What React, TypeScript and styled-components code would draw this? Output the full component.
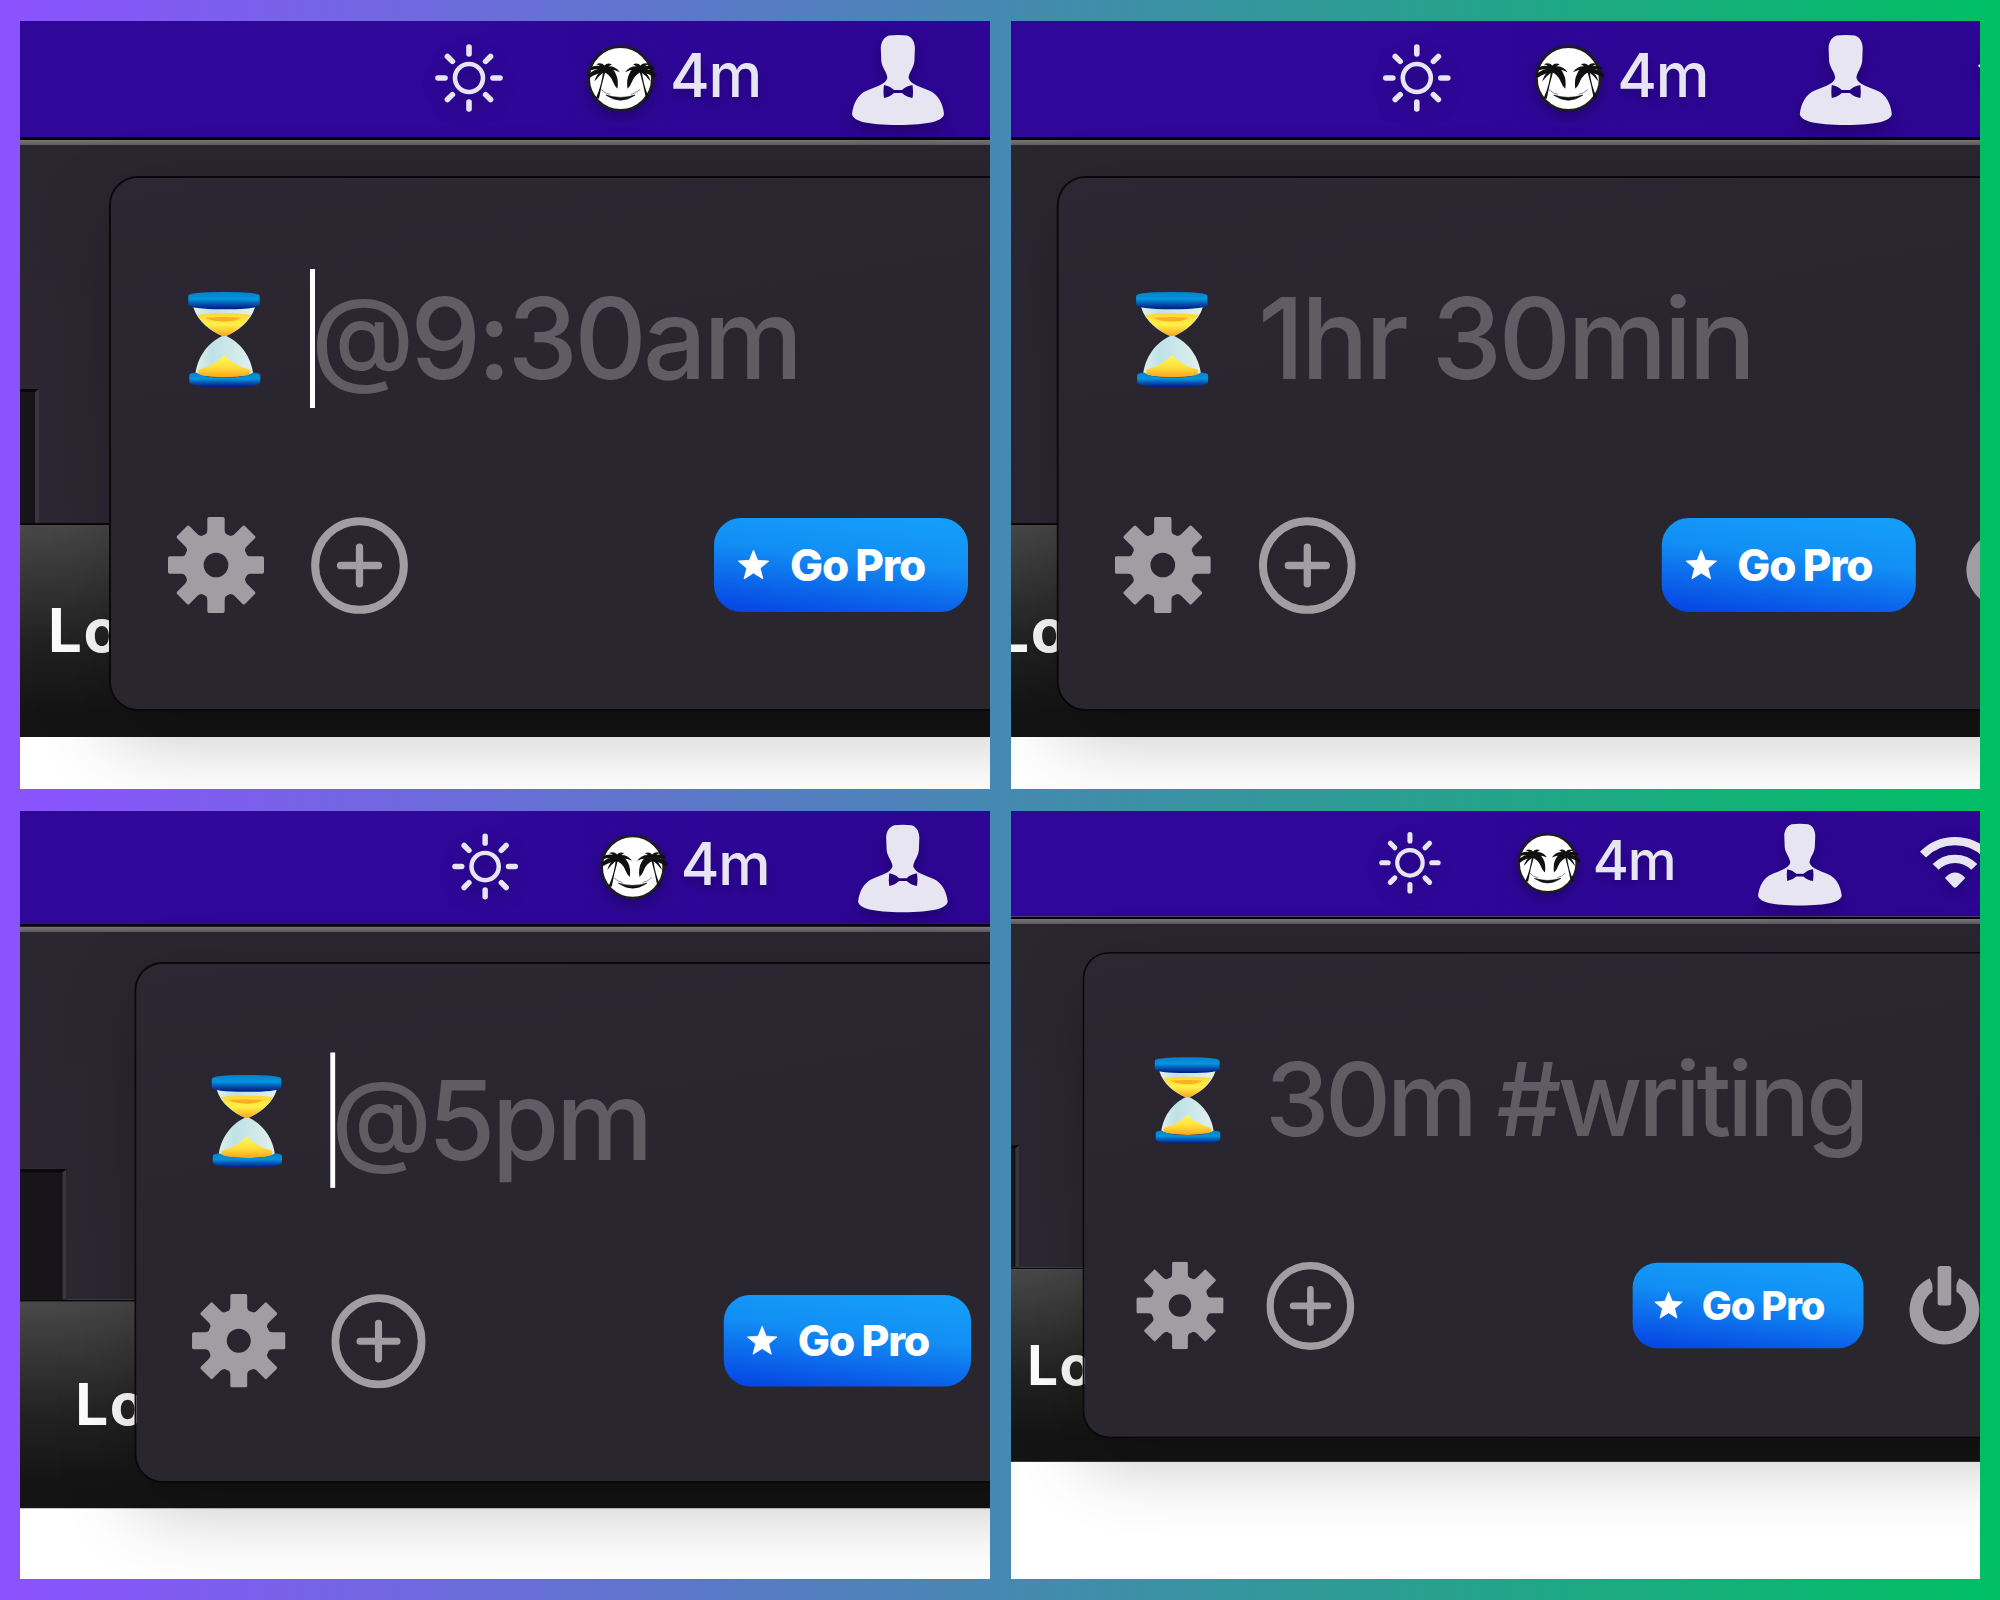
import React from "react";
import styled, { createGlobalStyle } from "styled-components";

const GlobalStyle = createGlobalStyle`
  * { box-sizing: border-box; }
  body { margin: 0; font-family: Inter, "Liberation Sans", sans-serif; }
`;

const Board = styled.main`
  display: grid;
  grid-template-columns: 969.5px 969.5px;
  grid-template-rows: 768px 768px;
  gap: 22px 21px;
  width: 2000px;
  height: 1600px;
  padding: 21px 20px;
  background: linear-gradient(90deg, #8c52ff, #00bf63);
`;

const Pane = styled.section`
  overflow: hidden;
  background: #fff;
`;

const Scene = styled.div<{ $shift: number; $scale: number }>`
  position: relative;
  display: flex;
  flex-direction: column;
  width: 1240px;
  height: 900px;
  margin-left: -60px;
  transform-origin: 60px 0;
  transform: translateX(${(p) => p.$shift}px) scale(${(p) => p.$scale});
`;

const MenuBar = styled.header`
  display: flex;
  align-items: flex-start;
  flex: none;
  height: 116px;
  padding: 14px 0 0 475px;
  color: #e8e5f3;
  background: linear-gradient(90deg, #2f0799 40%, #2c0591);
`;

const MenuIcon = styled.svg<{ $top: number; $left?: number }>`
  flex: none;
  overflow: visible;
  margin: ${(p) => p.$top}px 0 0 ${(p) => p.$left ?? 0}px;
  filter: drop-shadow(0 6px 8px rgba(10, 0, 50, 0.4));
`;

const MenuTime = styled.span`
  width: 104px;
  margin: 3.5px 0 0 16px;
  font-size: 60.5px;
  font-weight: 500;
  line-height: 72px;
  letter-spacing: -1.2px;
  text-shadow: 0 6px 10px rgba(10, 0, 50, 0.35);
  white-space: nowrap;
`;

const WindowBody = styled.div`
  display: flex;
  align-items: flex-end;
  flex: none;
  height: 386px;
  border-top: 3px solid #06030c;
  background: linear-gradient(#77747a 0, #5d5a60 5px, #2a2630 5px, #2d2733);
`;

const Well = styled.div`
  width: 79px;
  height: 134px;
  border-top: 3px solid #08070a;
  border-right: 4px solid #3b3540;
  background: #17151a;
`;

const Dock = styled.footer`
  flex: none;
  height: 214px;
  padding: 69px 0 0 88px;
  border-top: 2px solid #070707;
  color: #fff;
  background: linear-gradient(#484848, #222 55%, #141414 88%);
  font-size: 60px;
  font-weight: 650;
  line-height: 72px;
  letter-spacing: 1.5px;
`;

const Popover = styled.div`
  position: absolute;
  top: 157px;
  left: 151px;
  width: 1300px;
  height: 531px;
  padding-top: 90px;
  border-radius: 27px;
  background: linear-gradient(170deg, #2c2732 0%, #29252f 45%, #29272c 100%);
  box-shadow: 0 0 0 2px #09080b, 0 28px 80px rgba(0, 0, 0, 0.23);
`;

const EntryRow = styled.div`
  display: flex;
  align-items: center;
  height: 140px;
  padding-left: 76px;
`;

const Field = styled.div<{ $active: boolean }>`
  display: flex;
  align-items: center;
  height: 139px;
  margin-left: 48px;
  border-left: 5px solid ${(p) => (p.$active ? "#fff" : "transparent")};
`;

const Placeholder = styled.span<{ $tracking: number; $indent: number }>`
  margin: 0 0 1px ${(p) => p.$indent}px;
  color: #5f5c63;
  font-size: 112.5px;
  font-weight: 470;
  line-height: 140px;
  letter-spacing: ${(p) => p.$tracking}px;
  white-space: nowrap;
`;

const AtSign = styled.span`
  font-size: 0.93em;
  line-height: 1;
  vertical-align: 0.055em;
`;

const ActionRow = styled.div`
  display: flex;
  align-items: center;
  height: 96px;
  margin-top: 109px;
  padding-left: 56.5px;
  color: #a09ea3;
`;

const ActionIcon = styled.svg<{ $gap?: number }>`
  flex: none;
  margin-left: ${(p) => p.$gap ?? 0}px;
`;

const ProButton = styled.button`
  display: flex;
  align-items: center;
  width: 254px;
  height: 94px;
  margin: 0 0 0 306px;
  padding: 0 0 0 23px;
  border: 0;
  border-radius: 27px;
  color: #fff;
  background: linear-gradient(187deg, #149df9 8%, #128ff4 42%, #0644e2 98%);
  font: 800 44px/94px Inter, sans-serif;
  letter-spacing: -1.2px;
  word-spacing: -1px;
  white-space: nowrap;
`;

const StarShape = styled.svg`
  flex: none;
  margin-right: 20px;
`;

const Sun = () => (
  <MenuIcon $top={9} width="68" height="68" viewBox="-34 -34 68 68">
    <g fill="none" stroke="currentColor">
      <circle r="14" strokeWidth="4.6" />
      {[0, 45, 90, 135, 180, 225, 270, 315].map((a) => (
        <path key={a} d={a % 90 ? "M0-23.5V-30.5" : "M0-24V-31"} strokeWidth="5.6" strokeLinecap="round" transform={`rotate(${a})`} />
      ))}
    </g>
  </MenuIcon>
);

const Palm = () => (
  <g fill="#101010">
    <path d="M73 102Q69 145 51 186L60 188Q68 145 80 104Z" />
    <path d="M74 92Q100 90 110 112Q120 130 116 158Q107 150 102 136Q94 115 72 107Z" />
    <path d="M72 92Q50 84 34 94L37 102Q54 96 72 103Z" />
    <path d="M74 96Q46 96 27 116L33 125Q54 110 77 109Z" />
    <path d="M76 92Q106 84 123 108Q104 98 78 102Z" />
    <path d="M68 98Q66 88 52 84Q66 77 77 88Q84 78 99 84Q88 89 84 98Z" />
    <path d="M68 104Q54 112 46 136Q52 130 60 120Q70 112 74 108Z" />
  </g>
);

const PalmFace = () => (
  <MenuIcon $top={9.5} $left={84} width="67" height="67" viewBox="24 26 202 202">
    <circle cx="125" cy="127" r="96" fill="#fff" stroke="#1d1d1d" strokeWidth="8" />
    <Palm />
    <g transform="translate(262 0) scale(-1 1)">
      <Palm />
    </g>
    <path d="M81 177Q125 208 169 177Q125 191 81 177Z" fill="#101010" stroke="#101010" strokeWidth="2" />
    <path d="M66 160Q78 172 94 175M184 160Q172 172 156 175" fill="none" stroke="#777" strokeWidth="2.500" />
  </MenuIcon>
);

const Person = () => (
  <MenuIcon $top={0} $left={78} width="92" height="90" viewBox="0 0 92 90">
    <path
      fill="currentColor"
      fillRule="evenodd"
      d="M37 .6Q46-.4 55 .6C60 2 62.700 7 62.900 13L62.400 26C61.800 33 57 37 56.600 43C59 50 69 52 77 55.500C86 59 91 69 92 79C91 86 77 90 46 90C15 90 1 86 0 79C1 69 6 59 15 55.500C23 52 33 50 35.400 43C35 37 30 33 29.300 26L28.800 13C29 7 32 2 37 .6ZM32 50Q31 57 32 63Q38 62 42 58H50Q54 62 60.500 63Q61.500 57 60.500 50Q54 51 50 55H42Q38 51 32 50Z"
    />
  </MenuIcon>
);

const Wifi = () => (
  <MenuIcon $top={12} $left={85} width="79.200" height="59.400" viewBox="358 100 216 162">
    <path d="M370 160A134 134 0 0 1 562 160M408 197A81 81 0 0 1 524 197" fill="none" stroke="currentColor" strokeWidth="25" />
    <path d="M436 230Q466 198 497 230L471 257Q466 262 461 257Z" fill="currentColor" />
  </MenuIcon>
);

const Hourglass = () => (
  <svg width="74.700" height="98.700" viewBox="112 91 224 296">
    <defs>
      <linearGradient id="cap" x2="0" y2="1">
        <stop offset="0.1" stopColor="#0784cf" />
        <stop offset="0.4" stopColor="#0295df" />
        <stop offset="0.7" stopColor="#054fae" />
        <stop offset="0.95" stopColor="#031f85" />
      </linearGradient>
      <linearGradient id="glass">
        <stop offset="0" stopColor="#e3f1f0" />
        <stop offset="0.3" stopColor="#bfe1e5" />
        <stop offset="0.7" stopColor="#d2eaeb" />
        <stop offset="1" stopColor="#e5f1ef" />
      </linearGradient>
      <linearGradient id="sandTop" x2="0" y2="1">
        <stop offset="0" stopColor="#ffd633" />
        <stop offset="0.5" stopColor="#fff14a" />
        <stop offset="1" stopColor="#f9a51b" />
      </linearGradient>
      <linearGradient id="sandBase" x2="0" y2="1">
        <stop offset="0" stopColor="#fffb53" />
        <stop offset="0.55" stopColor="#ffdf3c" />
        <stop offset="1" stopColor="#fba51d" />
      </linearGradient>
    </defs>
    <path d="M131 146H316C303 190 262 218 230 232C270 250 306 293 311 350H137C142 293 178 250 218 232C184 218 144 190 131 146Z" fill="url(#glass)" />
    <path d="M144 168Q224 160 303 168C288 198 256 220 228 232H219C190 220 160 198 144 168Z" fill="url(#sandTop)" />
    <path d="M166 177Q224 173 274 177Q250 191 214 188Q182 186 166 177Z" fill="#fcae22" />
    <path d="M224 289C234 303 262 323 302 333V350Q224 362 146 350V333C186 323 212 303 224 289Z" fill="url(#sandBase)" />
    <path d="M116 112Q116 100 224 100Q330 100 330 112V137Q329 152 224 152Q118 152 116 137Z" fill="url(#cap)" />
    <path d="M119 350Q119 341 142 342Q154 356 224 356Q294 356 308 342Q332 341 332 350V370Q330 386 224 386Q121 386 119 370Z" fill="url(#cap)" />
  </svg>
);

const Gear = () => (
  <ActionIcon width="96" height="96" viewBox="-144 -144 288 288">
    <circle r="67" fill="none" stroke="currentColor" strokeWidth="60" />
    {[0, 45, 90, 135, 180, 225, 270, 315].map((a) => (
      <path key={a} fill="currentColor" transform={`rotate(${a})`} d="M-40-86Q-26-92-26-104V-139Q-26-144-21-144H21Q26-144 26-139V-104Q26-92 40-86Z" />
    ))}
  </ActionIcon>
);

const Plus = () => (
  <ActionIcon $gap={47.5} width="97" height="97" viewBox="-145.500 -145.500 291 291" fill="none" stroke="currentColor">
    <circle r="133" strokeWidth="24" />
    <path d="M-57 0H57M0-55V55" strokeWidth="22" strokeLinecap="round" />
  </ActionIcon>
);

const Power = () => (
  <ActionIcon $gap={50} width="78" height="88" viewBox="-39 -49 78 88">
    <path d="M-13.200-27.900A31 31 0 1 0 13.200-27.900" fill="none" stroke="currentColor" strokeWidth="14.600" transform="translate(0 -.5)" />
    <rect x="-13.200" y="-49" width="26.400" height="30" fill="#2a262e" />
    <rect x="-7.500" y="-48.500" width="15" height="43.500" rx="3" fill="currentColor" />
  </ActionIcon>
);

const Star = () => (
  <StarShape width="33" height="33" viewBox="-16.500 -17 33 33">
    <path d="M0-16L4.100-5.700L15.200-4.900L6.700 2.200L9.400 12.900L0 7L-9.400 12.900L-6.700 2.200L-15.200-4.900L-4.100-5.700Z" fill="#fff" stroke="#fff" strokeWidth=".8" />
  </StarShape>
);

type Shot = { text: string; active: boolean; shift: number; scale: number; tracking: number; indent: number };

const shots: Shot[] = [
  { text: "@9:30am", active: true, shift: 0, scale: 1, tracking: -3.8, indent: -3.5 },
  { text: "1hr 30min", active: false, shift: -43.2, scale: 1, tracking: -3.6, indent: -4 },
  { text: "@5pm", active: true, shift: 27.9, scale: 0.9738, tracking: -3.8, indent: -3.5 },
  { text: "30m #writing", active: false, shift: -9.2, scale: 0.909, tracking: -4.6, indent: -5 },
];

export default function App() {
  return (
    <>
      <GlobalStyle />
      <Board>
        {shots.map((s) => (
          <Pane key={s.text}>
            <Scene $shift={s.shift} $scale={s.scale}>
              <MenuBar>
                <Sun />
                <PalmFace />
                <MenuTime>4m</MenuTime>
                <Person />
                <Wifi />
              </MenuBar>
              <WindowBody>
                <Well />
              </WindowBody>
              <Dock>Lo</Dock>
              <Popover>
                <EntryRow>
                  <Hourglass />
                  <Field $active={s.active}>
                    <Placeholder $tracking={s.tracking} $indent={s.indent}>
                      {s.text.startsWith("@") && <AtSign>@</AtSign>}
                      {s.text.replace("@", "")}
                    </Placeholder>
                  </Field>
                </EntryRow>
                <ActionRow>
                  <Gear />
                  <Plus />
                  <ProButton>
                    <Star />
                    Go Pro
                  </ProButton>
                  <Power />
                </ActionRow>
              </Popover>
            </Scene>
          </Pane>
        ))}
      </Board>
    </>
  );
}
